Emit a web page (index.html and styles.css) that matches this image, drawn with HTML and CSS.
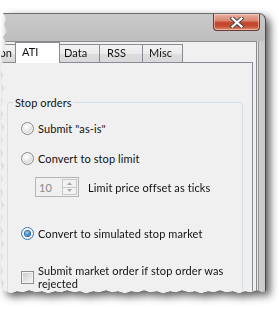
FILE: index.html
```html
<!DOCTYPE html>
<html>
<head>
<meta charset="utf-8">
<link rel="stylesheet" href="styles.css">
</head>
<body>
<div class="shot">
  <div class="window">
    <div class="titlebar">
      <div class="close">
        <svg width="14" height="11" viewBox="0 0 14 11">
          <path d="M2.5 1.5 L11.5 9.5 M11.5 1.5 L2.5 9.5" stroke="#4a4a4a" stroke-width="4.2" stroke-linecap="square" fill="none"/>
          <path d="M2.5 1.5 L11.5 9.5 M11.5 1.5 L2.5 9.5" stroke="#ffffff" stroke-width="2.2" stroke-linecap="square" fill="none"/>
        </svg>
      </div>
    </div>
    <div class="main">
      <div class="client">
        <div class="tabs">
          <div class="tab tab-on">on</div>
          <div class="tab tab-ati selected">ATI</div>
          <div class="tab tab-data">Data</div>
          <div class="tab tab-rss">RSS</div>
          <div class="tab tab-misc">Misc</div>
        </div>
        <div class="panel">
          <fieldset class="group">
            <legend>Stop orders</legend>
            <div class="row row1"><span class="radio"></span><span class="label">Submit "as-is"</span></div>
            <div class="row row2"><span class="radio"></span><span class="label">Convert to stop limit</span></div>
            <div class="spinrow">
              <div class="spin">
                <span class="spinval">10</span>
                <div class="spinbtns">
                  <div class="sbtn"><svg width="5" height="3" viewBox="0 0 5 3"><path d="M0 3 L2.5 0 L5 3Z" fill="#a8a8a8"/></svg></div>
                  <div class="sbtn"><svg width="5" height="3" viewBox="0 0 5 3"><path d="M0 0 L2.5 3 L5 0Z" fill="#a8a8a8"/></svg></div>
                </div>
              </div>
              <span class="label">Limit price offset as ticks</span>
            </div>
            <div class="row row3"><span class="radio checked"><span class="dot"></span></span><span class="label">Convert to simulated stop market</span></div>
            <div class="checkrow"><span class="check"></span><span class="label multi">Submit market order if stop order was rejected</span></div>
          </fieldset>
        </div>
      </div>
      <div class="frame-r"></div>
    </div>
  </div>
</div>
</body>
</html>
```

FILE: styles.css
```css
html, body {
  margin: 0;
  padding: 0;
  background: #ffffff;
}
body {
  font-family: Lato, "Liberation Sans", sans-serif;
  font-size: 11px;
  letter-spacing: 0.1px;
  color: #111;
  width: 279px;
  height: 309px;
  overflow: hidden;
}
.shot {
  padding-top: 13px;
  filter: drop-shadow(4px 4px 4px rgba(0, 0, 0, 0.65));
}
.window {
  width: 266px;
  height: 281px;
  box-sizing: border-box;
  background: linear-gradient(#c9c9c9, #bdbdbd 30px, #bcbcbc);
  border-top: 1px solid #6d6d6d;
  border-right: 1px solid #4a4a4a;
  border-top-right-radius: 7px;
  display: flex;
  flex-direction: column;
  overflow: hidden;
  clip-path: polygon(3px 0, 266px 0, 266px 278px, 262px 279px, 257px 277px, 251px 279px, 245px 278px, 239px 280px, 233px 278px, 226px 279px, 220px 277px, 214px 279px, 208px 278px, 201px 280px, 195px 278px, 189px 279px, 182px 277px, 176px 279px, 170px 278px, 163px 280px, 157px 278px, 150px 279px, 144px 277px, 138px 279px, 131px 278px, 125px 280px, 118px 278px, 112px 279px, 106px 277px, 99px 279px, 93px 278px, 86px 280px, 80px 278px, 74px 279px, 67px 277px, 61px 279px, 55px 278px, 48px 280px, 42px 278px, 36px 279px, 29px 277px, 23px 279px, 17px 278px, 11px 280px, 5px 278px, 2px 276px, 4px 270px, 1px 264px, 3px 257px, 0 251px, 3px 244px, 1px 238px, 4px 231px, 1px 225px, 3px 218px, 0 212px, 3px 205px, 1px 199px, 4px 192px, 1px 186px, 3px 179px, 0 173px, 3px 166px, 1px 160px, 4px 153px, 1px 147px, 3px 140px, 0 134px, 3px 127px, 1px 121px, 4px 114px, 1px 108px, 3px 101px, 0 95px, 3px 88px, 1px 82px, 4px 75px, 1px 69px, 3px 62px, 0 56px, 3px 49px, 1px 43px, 4px 36px, 6px 30px, 3px 24px, 7px 18px, 4px 12px, 6px 6px);
}
.titlebar {
  flex: none;
  height: 27px;
  display: flex;
  justify-content: flex-end;
  align-items: flex-start;
}
.close {
  width: 47px;
  height: 18px;
  margin-right: 5px;
  margin-top: -1px;
  box-sizing: border-box;
  border: 1px solid #6b3a33;
  border-top-color: #8a5a52;
  border-radius: 0 0 4px 4px;
  background: linear-gradient(#e9b0a1, #d98a74 40%, #c6432a 55%, #c34a30 75%, #dd8d6f);
  box-shadow: inset 0 0 0 1px rgba(255, 220, 210, 0.55);
  display: flex;
  align-items: center;
  justify-content: center;
}
.main {
  flex: 1;
  min-height: 0;
  display: flex;
}
.client {
  width: 257px;
  box-sizing: border-box;
  background: #f0f0f0;
  border-top: 1px solid #8c8c8c;
  border-right: 1px solid #8c8c8c;
  display: flex;
  flex-direction: column;
  overflow: hidden;
}
.frame-r {
  flex: 1;
  box-sizing: border-box;
  border-left: 1px solid #e6e6e6;
  background: linear-gradient(90deg, #9a9a9a 0, #9a9a9a 1px, #cfcfcf 1px, #c8c8c8);
}
.tabs {
  flex: none;
  height: 20px;
  display: flex;
  align-items: flex-end;
  position: relative;
  z-index: 1;
}
.tab {
  flex: none;
  height: 18px;
  box-sizing: border-box;
  border: 1px solid #898c95;
  border-bottom: none;
  background: linear-gradient(#f3f3f3, #ebebeb 50%, #dddddd 51%, #d9d9d9);
  line-height: 16px;
  margin-left: -1px;
  white-space: nowrap;
  overflow: hidden;
}
.tab-on {
  width: 37px;
  margin-left: -21px;
  text-align: right;
  padding-right: 3px;
}
.tab-ati {
  width: 45px;
  padding-left: 6px;
}
.tab-data {
  width: 41px;
  padding-left: 4px;
}
.tab-rss {
  width: 44px;
  padding-left: 7px;
}
.tab-misc {
  width: 41px;
  padding-left: 6px;
}
.tab.selected {
  height: 21px;
  margin-bottom: -1px;
  background: #ffffff;
  line-height: 17px;
  position: relative;
  z-index: 2;
}
.panel {
  flex: 1;
  width: 253px;
  box-sizing: border-box;
  border-top: 1px solid #898c95;
  border-right: 1px solid #898c95;
  background: #f0f0f0;
}
.group {
  margin: 32px 0 0 7px;
  width: 236px;
  box-sizing: border-box;
  border: 1px solid #d5dfe5;
  border-radius: 3px;
  padding: 0 0 20px 13px;
  min-height: 200px;
}
.group legend {
  margin-left: -7px;
  padding: 0 1px;
  line-height: 15px;
}
.row {
  display: flex;
  align-items: center;
  height: 16px;
}
.row1 { margin-top: 10px; }
.row2 { margin-top: 14px; }
.row3 { margin-top: 28px; }
.label {
  margin-left: 4px;
  white-space: nowrap;
}
.radio {
  width: 13px;
  height: 13px;
  box-sizing: border-box;
  border-radius: 50%;
  border: 1px solid #8b8b8b;
  background: radial-gradient(circle at 40% 35%, #ffffff 0, #ececec 35%, #d2d2d2 75%, #c8c8c8);
  box-shadow: inset 0 0 0 1px #f6f6f6;
  display: flex;
  align-items: center;
  justify-content: center;
  flex: none;
}
.radio.checked {
  border-color: #3a76a6;
  background: radial-gradient(circle at 40% 35%, #ffffff 0, #eef4f8 60%, #c9dae6);
}
.dot {
  width: 5px;
  height: 5px;
  border-radius: 50%;
  background: radial-gradient(circle at 40% 35%, #9fd6f7 0, #3c8ad0 55%, #17509a);
  box-shadow: 0 0 0 1px #2a64a8;
}
.spinrow {
  display: flex;
  align-items: center;
  margin-top: 11px;
  margin-left: 14px;
}
.spinrow .label {
  margin-left: 9px;
}
.spin {
  width: 44px;
  height: 20px;
  box-sizing: border-box;
  border: 1px solid #b5b5b5;
  background: #f0f0f0;
  display: flex;
  align-items: center;
  justify-content: space-between;
  padding: 1px;
}
.spinval {
  color: #8a8a8a;
  padding-left: 2px;
}
.spinbtns {
  width: 15px;
  height: 16px;
  display: flex;
  flex-direction: column;
}
.sbtn {
  flex: 1;
  box-sizing: border-box;
  border: 1px solid #c8c8c8;
  background: #f2f2f2;
  display: flex;
  align-items: center;
  justify-content: center;
}
.sbtn + .sbtn {
  border-top: none;
}
.checkrow {
  display: flex;
  align-items: center;
  margin-top: 23px;
}
.check {
  width: 13px;
  height: 13px;
  box-sizing: border-box;
  border: 1px solid #8e8f8f;
  background: linear-gradient(135deg, #c8c8c8, #e6e6e6 60%, #f4f4f4);
  box-shadow: inset 0 0 0 1px #f4f4f4;
  flex: none;
}
.label.multi {
  white-space: normal;
  line-height: 13px;
  width: 200px;
}
```
